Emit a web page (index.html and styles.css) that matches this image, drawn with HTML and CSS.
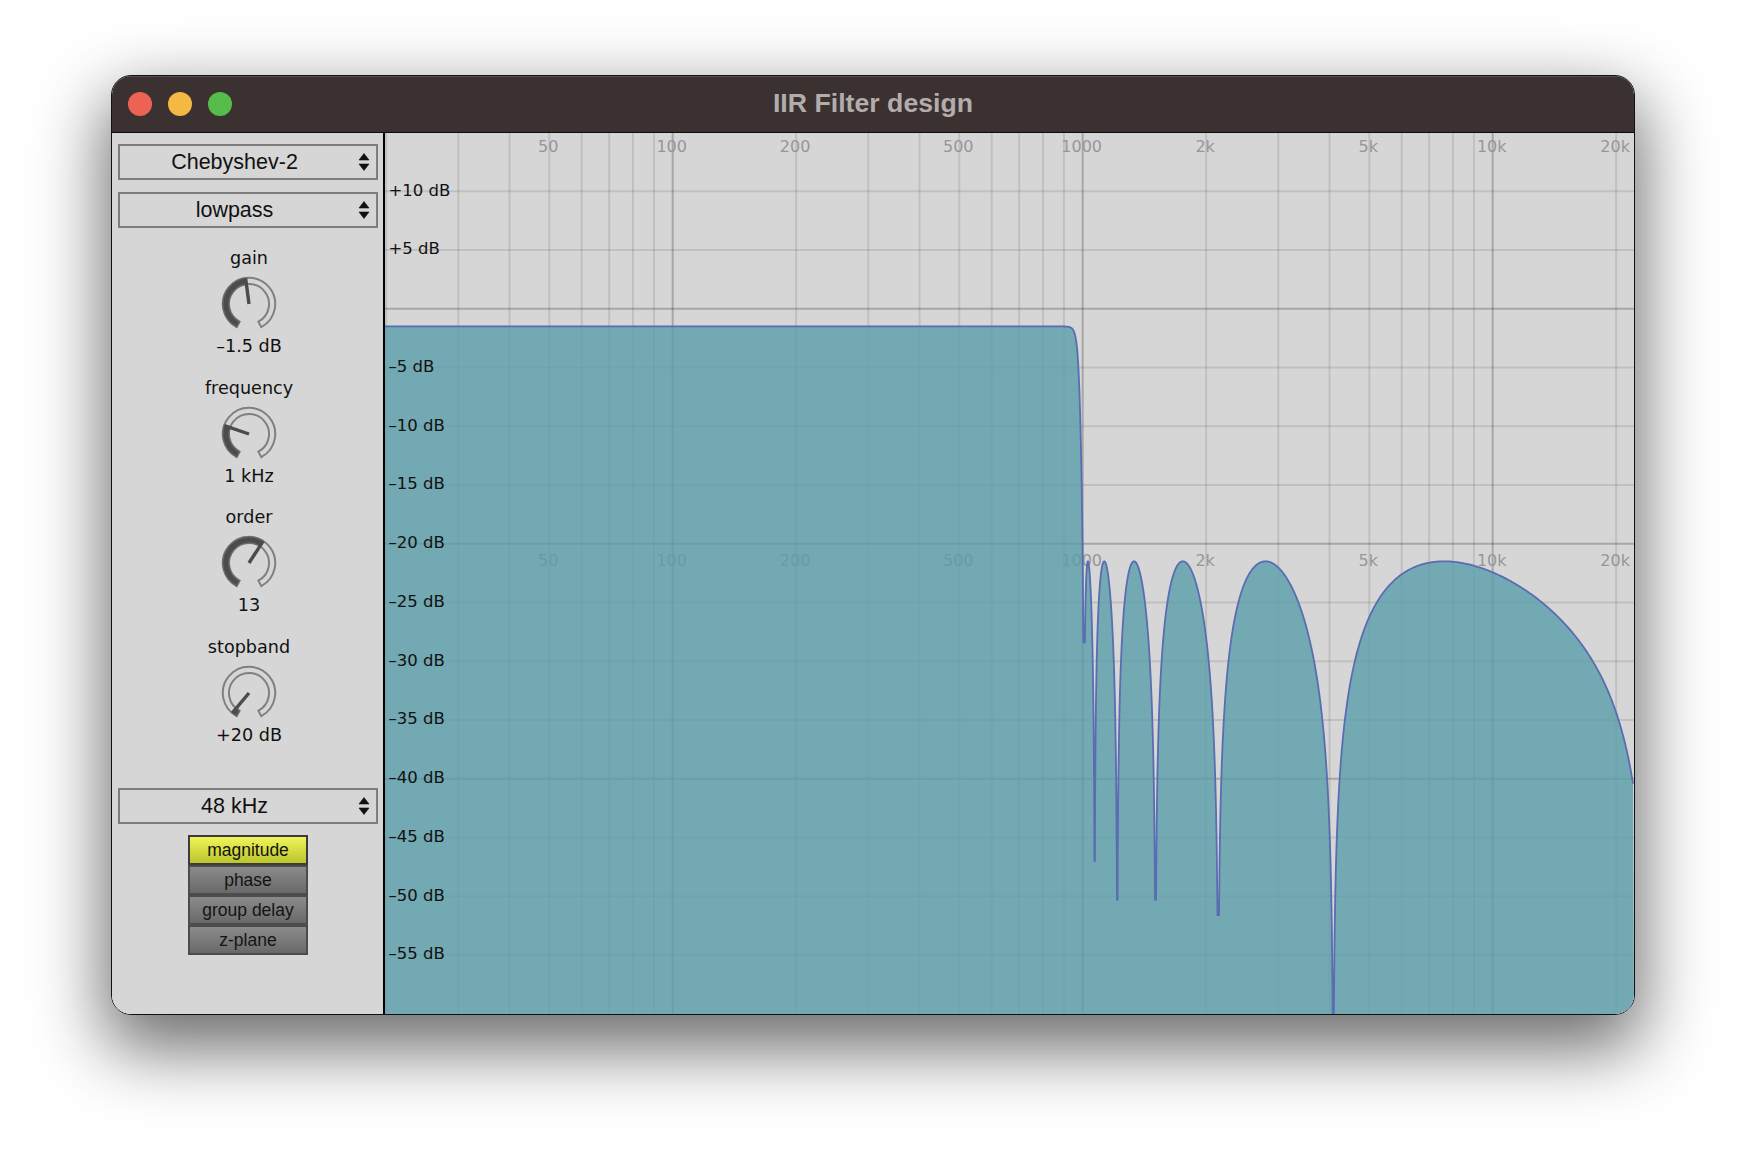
FILE: index.html
```html
<!DOCTYPE html>
<html lang="en">
<head>
  <meta charset="UTF-8">
  <title>IIR Filter design</title>
  <link rel="stylesheet" href="styles.css">
</head>
<body>
  <div class="window">
    <div class="titlebar">
      <div class="lights">
        <span class="light red"></span>
        <span class="light yellow"></span>
        <span class="light green"></span>
      </div>
      <div class="title">IIR Filter design</div>
    </div>

    <div class="content">
      <div class="sidebar">
        <div class="combo"><span>Chebyshev-2</span><svg class="arrows" viewBox="0 0 12 18"><path d="M6 0.5 L11 7 H1 Z M1 11 H11 L6 17.5 Z"/></svg></div>
        <div class="combo"><span>lowpass</span><svg class="arrows" viewBox="0 0 12 18"><path d="M6 0.5 L11 7 H1 Z M1 11 H11 L6 17.5 Z"/></svg></div>

        <div class="knobs">
          <div class="knob-group">
            <div class="knob-label">gain</div>
            <svg class="knob" data-angle="-7.5" viewBox="0 0 60 60"></svg>
            <div class="knob-label">–1.5 dB</div>
          </div>
          <div class="knob-group">
            <div class="knob-label">frequency</div>
            <svg class="knob" data-angle="-71" viewBox="0 0 60 60"></svg>
            <div class="knob-label">1 kHz</div>
          </div>
          <div class="knob-group">
            <div class="knob-label">order</div>
            <svg class="knob" data-angle="33" viewBox="0 0 60 60"></svg>
            <div class="knob-label">13</div>
          </div>
          <div class="knob-group">
            <div class="knob-label">stopband</div>
            <svg class="knob" data-angle="-140" viewBox="0 0 60 60"></svg>
            <div class="knob-label">+20 dB</div>
          </div>
        </div>

        <div class="combo"><span>48 kHz</span><svg class="arrows" viewBox="0 0 12 18"><path d="M6 0.5 L11 7 H1 Z M1 11 H11 L6 17.5 Z"/></svg></div>

        <div class="modes">
          <div class="mode active">magnitude</div>
          <div class="mode">phase</div>
          <div class="mode">group delay</div>
          <div class="mode">z-plane</div>
        </div>
      </div>

      <div class="plot">
        <svg id="plot" width="1249" height="881"></svg>
      </div>
    </div>
  </div>
  <script src="plot.js"></script>
</body>
</html>
```

FILE: styles.css
```css
html, body {
  margin: 0;
  height: 100%;
  overflow: hidden;
  background: #fff;
}
body {
  padding: 75px 0 0 111px;
  box-sizing: border-box;
  font-family: "Liberation Sans", Arial, sans-serif;
  color: #111;
}
.window {
  width: 1524px;
  height: 940px;
  box-sizing: border-box;
  border: 1px solid #111;
  border-radius: 20px;
  overflow: hidden;
  display: flex;
  flex-direction: column;
  box-shadow: 0 28px 70px 6px rgba(0, 0, 0, 0.58);
}
.titlebar {
  height: 57px;
  flex: none;
  display: flex;
  align-items: center;
  justify-content: center;
  position: relative;
  background: #3a3130;
  border-top: 1px solid #55504f;
  border-bottom: 1px solid #0c0c0c;
  box-sizing: border-box;
  padding-bottom: 3px;
}
.lights {
  position: absolute;
  left: 16px;
  top: 15px;
  display: flex;
  gap: 16px;
}
.light {
  width: 24px;
  height: 24px;
  border-radius: 50%;
}
.red { background: #ec6356; }
.yellow { background: #f4b942; }
.green { background: #57bd4a; }
.title {
  font-size: 26.7px;
  font-weight: bold;
  color: #b2adac;
}
.content {
  flex: 1;
  display: flex;
  min-height: 0;
}
.sidebar {
  width: 271px;
  flex: none;
  background: #d6d6d6;
  border-right: 2px solid #000;
  padding-top: 11px;
  display: flex;
  flex-direction: column;
}
.combo {
  width: 260px;
  height: 36px;
  flex: none;
  box-sizing: border-box;
  margin: 0 0 12px 6px;
  border: 2px solid #7d7d7d;
  display: flex;
  align-items: center;
  padding: 1px 6px 0 0;
  font-size: 21.5px;
}
.combo span {
  flex: 1;
  text-align: center;
  padding-right: 9px;
}
.arrows {
  width: 12px;
  height: 18px;
  margin-top: -1px;
  fill: #111;
  stroke: #111;
  stroke-width: 0.6;
  stroke-linejoin: round;
}
.knobs {
  margin-top: 7px;
  padding-left: 3px;
  height: 541px;
  display: flex;
  flex-direction: column;
  gap: 19.7px;
  align-items: center;
}
.knob-group {
  height: 110px;
  width: 100%;
  display: flex;
  flex-direction: column;
  align-items: center;
}
.knob-label {
  height: 22px;
  line-height: 22px;
  font-family: "DejaVu Sans", sans-serif;
  font-size: 17.6px;
  color: #111;
  flex: none;
}
.knob {
  width: 60px;
  height: 60px;
  margin: 5px 0 1px;
  flex: none;
}
.knob .track {
  fill: none;
  stroke: #808080;
  stroke-width: 2;
}
.knob .value {
  fill: #4c4c4c;
  stroke: #6a6a6a;
  stroke-width: 1.2;
}
.knob .needle {
  stroke: #4c4c4c;
  stroke-width: 3.4;
}
.modes {
  width: 120px;
  margin: -1px 0 0 76px;
  display: flex;
  flex-direction: column;
}
.mode {
  height: 30px;
  box-sizing: border-box;
  border: 2px solid #4c4c4c;
  background: linear-gradient(#8b8b8b, #696969);
  font-size: 17.5px;
  line-height: 26px;
  text-align: center;
  color: #141414;
}
.mode.active {
  border-color: #3c3c3c;
  background: linear-gradient(#f0f45a, #bcc52c);
  color: #111;
}
.plot {
  flex: 1;
  min-width: 0;
  background: #d6d6d6;
}
#plot {
  display: block;
}
.grid-minor { stroke: rgba(0, 0, 0, 0.1); stroke-width: 2; }
.grid-major { stroke: rgba(0, 0, 0, 0.22); stroke-width: 2; }
.freq-label {
  font-family: "DejaVu Sans", sans-serif;
  font-size: 16px;
  fill: #969696;
  text-anchor: middle;
}
.db-label {
  font-family: "DejaVu Sans", sans-serif;
  font-size: 16.5px;
  fill: #111;
}
.curve-fill { fill: rgb(90, 157, 169); fill-opacity: 0.8; }
.curve-line { fill: none; stroke: #5a6cb2; stroke-width: 1.8; }
```

FILE: plot.js
```js
// Knob drawing
const NS = 'http://www.w3.org/2000/svg';

function el(parent, tag, attrs, text) {
  const node = document.createElementNS(NS, tag);
  for (const k in attrs) node.setAttribute(k, attrs[k]);
  if (text) node.textContent = text;
  parent.appendChild(node);
  return node;
}

function polar(r, deg) {
  const a = deg * Math.PI / 180;
  return [30 + r * Math.sin(a), 30 - r * Math.cos(a)];
}

function ring(r0, r1, a0, a1) {
  const large = a1 - a0 > 180 ? 1 : 0;
  const [x0, y0] = polar(r1, a0);
  const [x1, y1] = polar(r1, a1);
  const [x2, y2] = polar(r0, a1);
  const [x3, y3] = polar(r0, a0);
  return `M${x0} ${y0} A${r1} ${r1} 0 ${large} 1 ${x1} ${y1} L${x2} ${y2} A${r0} ${r0} 0 ${large} 0 ${x3} ${y3} Z`;
}

document.querySelectorAll('.knob').forEach(svg => {
  const angle = Number(svg.dataset.angle);
  el(svg, 'path', { class: 'track', d: ring(20, 26.2, -152, 152) });
  el(svg, 'path', { class: 'value', d: ring(20, 26.2, -152, angle) });
  const [x, y] = polar(26, angle);
  el(svg, 'line', { class: 'needle', x1: 30, y1: 30, x2: x, y2: y });
});

// Plot: x is log frequency, y is dB
const plot = document.getElementById('plot');
const W = 1249, H = 881;
const freqX = f => 287.7 + 410 * Math.log10(f / 100);
const dbY = db => 175.7 - 11.75 * db;

const lines = [];
for (const decade of [10, 100, 1000, 10000]) {
  for (let i = 1; i <= 9; i++) {
    const f = decade * i;
    if (f >= 20 && f <= 20000) lines.push(f);
  }
}
lines.forEach(f => {
  const major = f === 100 || f === 1000 || f === 10000;
  const x = freqX(f);
  el(plot, 'line', { class: major ? 'grid-major' : 'grid-minor', x1: x, y1: 0, x2: x, y2: H });
});
for (let db = 10; db >= -55; db -= 5) {
  const major = db % 20 === 0;
  const y = dbY(db);
  el(plot, 'line', { class: major ? 'grid-major' : 'grid-minor', x1: 0, y1: y, x2: W, y2: y });
}

// Frequency labels sit under the fill, in both rows
const freqLabels = [[50, '50'], [100, '100'], [200, '200'], [500, '500'], [1000, '1000'],
  [2000, '2k'], [5000, '5k'], [10000, '10k'], [20000, '20k']];
[18.5, 432.5].forEach(y => {
  freqLabels.forEach(([f, text]) => {
    el(plot, 'text', { class: 'freq-label', x: freqX(f) - 1, y: y }, text);
  });
});

// Chebyshev type 2 lowpass: order 13, 20 dB stopband, edge at 1 kHz, 48 kHz rate
const ORDER = 13, FS = 48000, GAIN = -1.5;
const edge = Math.tan(Math.PI * 1000 / FS);

function cheb(n, x) {
  return x >= 1 ? Math.cosh(n * Math.acosh(x)) : Math.cos(n * Math.acos(x));
}

function responseDb(f) {
  const t = cheb(ORDER, edge / Math.tan(Math.PI * f / FS));
  return GAIN - 10 * Math.log10(1 + 99 / (t * t));
}

const notchFloors = [[701, -28.4], [715, -47], [740, -50.3], [785, -50.3], [855, -51.6], [W, -60]];

function floorAt(px) {
  const hit = notchFloors.find(([limit]) => px <= limit);
  return px < 697 ? -60 : hit[1];
}

let points = '';
for (let px = 0; px <= W; px += px > 690 && px < 960 ? 0.1 : 1) {
  const f = 100 * Math.pow(10, (px - 287.7) / 410);
  const db = Math.max(responseDb(f), floorAt(px));
  points += `${px === 0 ? 'M' : 'L'}${px.toFixed(1)} ${dbY(db).toFixed(2)} `;
}
el(plot, 'path', { class: 'curve-fill', d: `${points}L${W} ${H} L0 ${H} Z` });
el(plot, 'path', { class: 'curve-line', d: points });

// dB labels go on top of the curve
for (let db = 10; db >= -55; db -= 5) {
  if (db === 0) continue;
  const text = (db > 0 ? '+' : '–') + Math.abs(db) + ' dB';
  el(plot, 'text', { class: 'db-label', x: 3.5, y: dbY(db) + 4.5 }, text);
}
```
